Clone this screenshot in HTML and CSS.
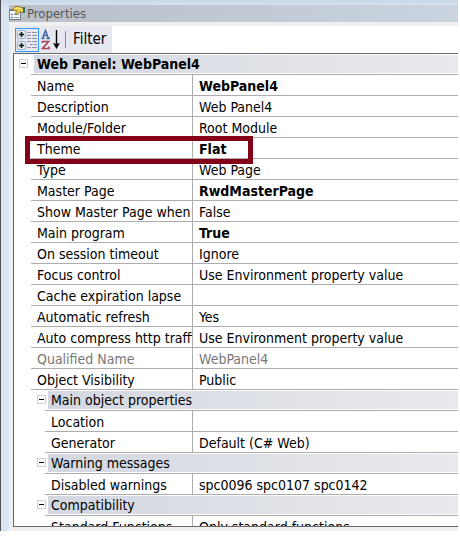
FILE: index.html
```html
<!DOCTYPE html>
<html lang="en">
<head>
<meta charset="utf-8">
<title>Properties</title>
<link rel="stylesheet" href="styles.css">
</head>
<body>
<main class="window">
  <header class="title">
    <svg class="title-icon" width="16" height="16" viewBox="0 0 16 16" aria-hidden="true">
      <rect x="0" y="3" width="12" height="11" fill="#6b7885"/>
      <rect x="1" y="4" width="10" height="9" fill="#f4f8fb"/>
      <path d="M1 4.500h9" stroke="#5c88c0"/>
      <path d="M2 8.500h2M2 11.500h2" stroke="#3b5f94"/>
      <path d="M5 8.500h5M5 11.500h5" stroke="#8b98aa"/>
      <path d="M3 4l3-3.500h4l5 2v4l-4-.5-3 2.500-2-1 2-2.500z" fill="#e9c83c" stroke="#77652a" stroke-width=".7"/>
      <path d="M6 2.500l4-.5 3 1.500" fill="none" stroke="#fff0a0"/>
      <path d="M14 1h2v6h-2z" fill="#2e6e5c"/>
    </svg>
    <h1>Properties</h1>
  </header>
  <div class="content">
    <div class="toolbar" role="toolbar" aria-label="Property view">
      <button class="tool selected" type="button" aria-label="Categorized">
        <svg width="22" height="22" viewBox="0 0 22 22">
          <rect x="1.500" y="1.500" width="8" height="8" rx="2" fill="#e6eef7" stroke="#8fa9c7"/>
          <rect x="1.500" y="12.500" width="8" height="8" rx="2" fill="#e6eef7" stroke="#8fa9c7"/>
          <path d="M3 5.500h5M5.500 3v5M3 16.500h5M5.500 14v5" stroke="#111" stroke-width="1.600"/>
          <path d="M11 3.500h4M16 3.500h5M11 6.500h4M16 6.500h5M11 9.500h4M16 9.500h5M11 12.500h4M16 12.500h5M14 15.500h3M18 15.500h3M11 18.500h4M16 18.500h5" stroke="#8f93a2"/>
        </svg>
      </button>
      <button class="tool" type="button" aria-label="Alphabetical">
        <svg width="20" height="22" viewBox="0 0 20 22">
          <path d="M.5 9.500h3M5.500 9.500h3.500M1.500 9.500L4.500 1.500l3 8M3 6.500h4" fill="none" stroke="#4167ae" stroke-width="1.500"/>
          <path d="M1.500 14v-1.500h6l-6 7h6.500v-2" fill="none" stroke="#a94353" stroke-width="1.600"/>
          <path d="M15.500 1v16" stroke="#000" stroke-width="1.400"/>
          <path d="M12 14l3.500 1 3.500-1-3.500 6z"/>
        </svg>
      </button>
      <span class="separator"></span>
      <button class="filter" type="button">Filter</button>
    </div>
    <div class="panel">
      <table class="grid">
        <colgroup><col class="col-gutter"><col class="col-name"><col></colgroup>
        <tbody>
          <tr><td class="gutter"><button class="toggle" type="button" aria-label="Collapse Web Panel"></button></td><th colspan="2"><div class="heading"><div class="group root">Web Panel: WebPanel4</div></div></th></tr>
          <tr><td></td><td><div class="name">Name</div></td><td><div class="value set">WebPanel4</div></td></tr>
          <tr><td></td><td><div class="name">Description</div></td><td><div class="value">Web Panel4</div></td></tr>
          <tr><td></td><td><div class="name">Module/Folder</div></td><td><div class="value">Root Module</div></td></tr>
          <tr class="marked"><td></td><td><div class="name">Theme</div></td><td><div class="value set">Flat</div><span class="marker"></span></td></tr>
          <tr><td></td><td><div class="name">Type</div></td><td><div class="value">Web Page</div></td></tr>
          <tr><td></td><td><div class="name">Master Page</div></td><td><div class="value set">RwdMasterPage</div></td></tr>
          <tr><td></td><td><div class="name">Show Master Page when</div></td><td><div class="value">False</div></td></tr>
          <tr><td></td><td><div class="name">Main program</div></td><td><div class="value set">True</div></td></tr>
          <tr><td></td><td><div class="name">On session timeout</div></td><td><div class="value">Ignore</div></td></tr>
          <tr><td></td><td><div class="name">Focus control</div></td><td><div class="value">Use Environment property value</div></td></tr>
          <tr><td></td><td><div class="name">Cache expiration lapse</div></td><td><div class="value"></div></td></tr>
          <tr><td></td><td><div class="name">Automatic refresh</div></td><td><div class="value">Yes</div></td></tr>
          <tr><td></td><td><div class="name">Auto compress http traffic</div></td><td><div class="value">Use Environment property value</div></td></tr>
          <tr class="readonly"><td></td><td><div class="name">Qualified Name</div></td><td><div class="value">WebPanel4</div></td></tr>
          <tr><td></td><td><div class="name">Object Visibility</div></td><td><div class="value">Public</div></td></tr>
          <tr><td></td><th colspan="2"><div class="heading nested-heading"><button class="toggle" type="button" aria-label="Collapse Main object properties"></button><div class="group">Main object properties</div></div></th></tr>
          <tr class="nested"><td></td><td><div class="name">Location</div></td><td><div class="value"></div></td></tr>
          <tr class="nested"><td></td><td><div class="name">Generator</div></td><td><div class="value">Default (C# Web)</div></td></tr>
          <tr><td></td><th colspan="2"><div class="heading nested-heading"><button class="toggle" type="button" aria-label="Collapse Warning messages"></button><div class="group">Warning messages</div></div></th></tr>
          <tr class="nested"><td></td><td><div class="name">Disabled warnings</div></td><td><div class="value">spc0096 spc0107 spc0142</div></td></tr>
          <tr><td></td><th colspan="2"><div class="heading nested-heading"><button class="toggle" type="button" aria-label="Collapse Compatibility"></button><div class="group">Compatibility</div></div></th></tr>
          <tr class="nested"><td></td><td><div class="name">Standard Functions</div></td><td><div class="value">Only standard functions</div></td></tr>
        </tbody>
      </table>
    </div>
  </div>
</main>
</body>
</html>
```
FILE: styles.css
```css
* { box-sizing: border-box; }

body {
  margin: 0;
  background: #fff;
  color: #000;
  font: 14px/19px "DejaVu Sans Condensed", "DejaVu Sans", sans-serif;
}

button {
  margin: 0;
  padding: 0;
  border: 0;
  background: none;
  color: inherit;
  font: inherit;
}

.window {
  display: flex;
  flex-direction: column;
  height: calc(100vh - 8px);
  margin-right: 2px;
  padding: 5px 0 0 8px;
  border-left: 1px solid #504f57;
  background: linear-gradient(#c8d7e5, #d8e4f1 6px);
}

.title {
  display: flex;
  flex: none;
  align-items: center;
  gap: 2px;
  height: 17px;
  background: linear-gradient(90deg, #b9bec6, #c9d4e0);
}

.title h1 {
  margin: 0;
  color: #56565c;
  font-size: 13px;
  line-height: 17px;
  font-weight: normal;
}

.content {
  display: flex;
  flex: 1;
  flex-direction: column;
  min-height: 0;
  padding: 4px 0 4px 4px;
  background: #f0f0f0;
}

.toolbar {
  display: flex;
  flex: none;
  align-items: center;
  height: 27px;
  padding-left: 2px;
  background: linear-gradient(90deg, #f0f0f0 2px, #e6e7f0 2px, #e6e7f0 99px, #fff 99px);
}

.tool { display: flex; }
.tool.selected { border: 1px solid #3399ff; margin-right: 2px; }

.separator {
  width: 1px;
  height: 17px;
  margin: 0 7px 0 4px;
  background: #8587a8;
}

.filter { font-size: 15px; }

.panel {
  flex: 1;
  min-height: 0;
  overflow: hidden;
  border: 1px solid #696969;
  border-right: 0;
  background: #fff;
}

.grid {
  width: 100%;
  table-layout: fixed;
  border-spacing: 0;
}

.col-gutter { width: 17px; }
.col-name { width: 161px; }

td, th {
  padding: 0;
  text-align: left;
  font-weight: normal;
  vertical-align: top;
}

.name, .value, .heading {
  height: 21px;
  border-bottom: 1px solid #adadad;
}

.name, .value {
  overflow: hidden;
  padding-left: 6px;
  padding-top: 2px;
  white-space: nowrap;
}

.value { border-left: 1px solid #adadad; }
.readonly { color: #777; }
.set, .root { font-weight: bold; }

.heading {
  display: flex;
  padding: 1px 0 1px 3px;
}

.group {
  flex: 1;
  padding-left: 3px;
  background: linear-gradient(90deg, #d3d7e1, #e9eaed);
}

.nested-heading {
  gap: 2px;
  margin-left: 14px;
  padding-left: 0;
}

.nested-heading .toggle { margin: 4px 0 0 -8px; }
.nested .name { margin-left: 14px; }

.toggle {
  display: block;
  width: 9px;
  height: 9px;
  border: 1px solid #cdd0dc;
  background: linear-gradient(#000, #000) center / 5px 1px no-repeat #fff;
}

.gutter .toggle { margin: 5px 0 0 5px; }

.marked { position: relative; }

.marker {
  position: absolute;
  top: -2px;
  left: 11px;
  width: 228px;
  height: 28px;
  border: 5px solid #840018;
  pointer-events: none;
}
```
